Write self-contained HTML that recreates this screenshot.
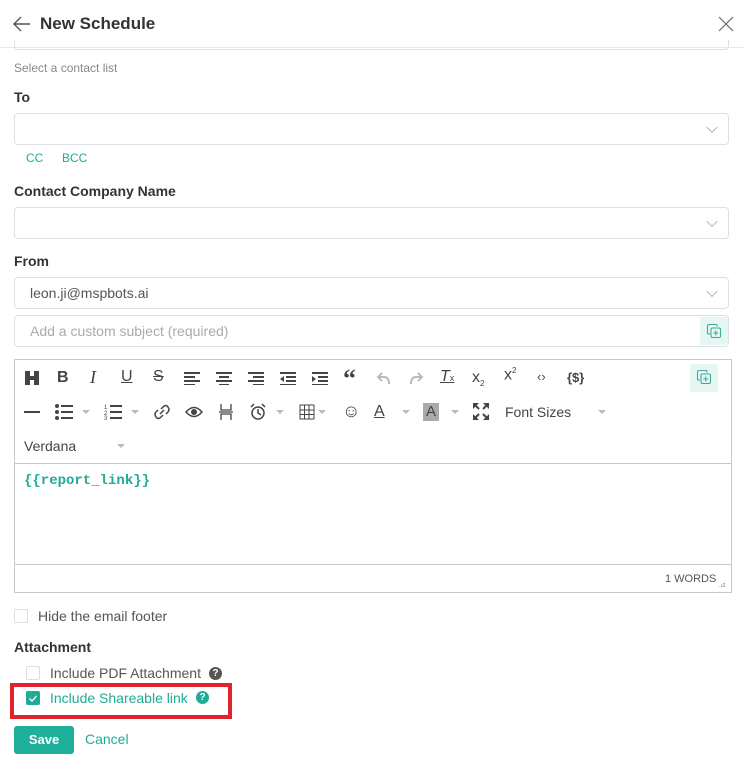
<!DOCTYPE html>
<html><head><meta charset="utf-8">
<style>
*{box-sizing:border-box;margin:0;padding:0}
body{width:744px;height:769px;overflow:hidden;background:#fff;font-family:"Liberation Sans",sans-serif;color:#333;position:relative}
.a{position:absolute}
.lbl{position:absolute;left:14px;font-size:14px;font-weight:bold;color:#333}
.inp{position:absolute;left:14px;width:715px;border:1px solid #dcdfe6;border-radius:4px;background:#fff}
.chev{position:absolute;right:12px;top:50%;width:8px;height:8px;border-right:1px solid #b0b3b8;border-bottom:1px solid #b0b3b8;transform:translateY(-70%) rotate(45deg)}
.tb{position:absolute;font-size:16px;color:#444;line-height:1}
.dd{position:absolute;width:0;height:0;border-left:4px solid transparent;border-right:4px solid transparent;border-top:4px solid #bbb}
.cb{position:absolute;width:14px;height:14px;border:1px solid #dcdfe6;border-radius:2px;background:#fff}
.teal{color:#1fac96}
.cpy{position:absolute;width:28px;height:28px;background:#e6f6f3;border-radius:3px}
</style></head><body>
<svg class="a" style="left:12px;top:15px" width="20" height="18" viewBox="0 0 20 18"><path d="M18 9H2M9 2L2 9l7 7" fill="none" stroke="#555" stroke-width="1.4"/></svg>
<div class="a" style="left:40px;top:14px;font-size:17px;font-weight:bold;color:#333">New Schedule</div>
<svg class="a" style="left:718px;top:16px" width="16" height="16" viewBox="0 0 16 16"><path d="M1 1L15 15M15 1L1 15" stroke="#666" stroke-width="1.2"/></svg>
<div class="a" style="left:0;top:47px;width:744px;height:1px;background:#e8e8e8"></div>
<div class="a" style="left:14px;top:40px;width:715px;height:10px;border:1px solid #dcdfe6;border-top:none;border-radius:0 0 4px 4px"></div>
<div class="a" style="left:14px;top:61px;font-size:12px;color:#888">Select a contact list</div>

<div class="lbl" style="top:89px">To</div>
<div class="inp" style="top:113px;height:32px"><div class="chev"></div></div>
<div class="a teal" style="left:26px;top:151px;font-size:12px">CC</div>
<div class="a teal" style="left:62px;top:151px;font-size:12px">BCC</div>

<div class="lbl" style="top:183px">Contact Company Name</div>
<div class="inp" style="top:207px;height:32px"><div class="chev"></div></div>

<div class="lbl" style="top:253px">From</div>
<div class="inp" style="top:277px;height:32px"><div class="a" style="left:15px;top:7px;font-size:14px;color:#555">leon.ji@mspbots.ai</div><div class="chev"></div></div>
<div class="inp" style="top:315px;height:32px"><div class="a" style="left:15px;top:7px;font-size:14px;color:#aaa">Add a custom subject (required)</div>
<div class="cpy" style="right:0;top:1px;border-radius:0 3px 3px 0"></div></div>
<svg class="a" style="left:706px;top:323px" width="16" height="16" viewBox="0 0 16 16"><path d="M11 3.5V2.5Q11 1.5 10 1.5H3Q1.5 1.5 1.5 3v7q0 1 1 1H4" fill="none" stroke="#3aae97" stroke-width="1.1"/><rect x="5" y="5" width="9.5" height="9.5" rx="1.5" fill="none" stroke="#3aae97" stroke-width="1.1"/><path d="M9.75 7.5v5M7.25 10h5" stroke="#3aae97" stroke-width="1.1"/></svg>

<div class="a" style="left:14px;top:359px;width:718px;height:234px;border:1px solid #c8c8c8"></div>
<div class="a" style="left:15px;top:463px;width:716px;height:1px;background:#c8c8c8"></div>
<div class="a" style="left:15px;top:564px;width:716px;height:1px;background:#c8c8c8"></div>
<div class="cpy" style="left:690px;top:364px"></div>
<svg class="a" style="left:696px;top:369px" width="16" height="16" viewBox="0 0 16 16"><path d="M11 3.5V2.5Q11 1.5 10 1.5H3Q1.5 1.5 1.5 3v7q0 1 1 1H4" fill="none" stroke="#3aae97" stroke-width="1.1"/><rect x="5" y="5" width="9.5" height="9.5" rx="1.5" fill="none" stroke="#3aae97" stroke-width="1.1"/><path d="M9.75 7.5v5M7.25 10h5" stroke="#3aae97" stroke-width="1.1"/></svg>

<svg class="a" style="left:24px;top:370px" width="16" height="16"><rect x="1" y="1" width="5" height="14" fill="#444"/><rect x="10" y="1" width="5" height="14" fill="#444"/><rect x="5" y="6" width="6" height="4" fill="#444"/></svg>
<div class="tb" style="left:57px;top:370px;font-weight:bold">B</div>
<div class="tb" style="left:90px;font-style:italic;font-family:'Liberation Serif',serif;font-size:18px;top:368px">I</div>
<div class="tb" style="left:121px;top:369px;text-decoration:underline">U</div>
<div class="tb" style="left:153px;top:369px;text-decoration:line-through">S</div>
<svg class="a" style="left:184px;top:371px" width="150" height="14"><g fill="#444">
<rect x="0" y="1" width="16" height="2"/><rect x="0" y="5" width="11" height="2"/><rect x="0" y="9" width="16" height="2"/><rect x="0" y="13" width="11" height="1.5"/>
<rect x="32" y="1" width="16" height="2"/><rect x="35" y="5" width="10" height="2"/><rect x="32" y="9" width="16" height="2"/><rect x="35" y="13" width="10" height="1.5"/>
<rect x="64" y="1" width="16" height="2"/><rect x="69" y="5" width="11" height="2"/><rect x="64" y="9" width="16" height="2"/><rect x="69" y="13" width="11" height="1.5"/>
<rect x="96" y="1" width="16" height="2"/><rect x="102" y="5" width="10" height="2"/><rect x="102" y="9" width="10" height="2"/><rect x="96" y="13" width="16" height="1.5"/><path d="M96 8l4-3v6z"/>
<rect x="128" y="1" width="16" height="2"/><rect x="134" y="5" width="10" height="2"/><rect x="134" y="9" width="10" height="2"/><rect x="128" y="13" width="16" height="1.5"/><path d="M132 8l-4-3v6z"/>
</g></svg>
<div class="tb" style="left:343px;top:366px;font-size:26px;font-weight:bold;font-family:'Liberation Serif',serif">“</div>
<svg class="a" style="left:376px;top:371px" width="16" height="14"><path d="M6 2L2 6l4 4M2 6h6q5 0 5 7" fill="none" stroke="#bbb" stroke-width="2"/></svg>
<svg class="a" style="left:408px;top:371px" width="16" height="14"><path d="M10 2l4 4-4 4M14 6H8q-5 0-5 7" fill="none" stroke="#bbb" stroke-width="2"/></svg>
<div class="tb" style="left:440px;top:369px;font-style:italic;text-decoration:underline">T<span style="font-size:9px;font-style:normal">x</span></div>
<div class="tb" style="left:472px;top:370px">x<sub style="font-size:8px">2</sub></div>
<div class="tb" style="left:504px;top:367px">x<sup style="font-size:8px">2</sup></div>
<div class="tb" style="left:537px;top:370px;font-size:13px">‹›</div>
<div class="tb" style="left:567px;top:371px;font-size:13px;font-weight:bold">{$}</div>

<div class="a" style="left:24px;top:411px;width:16px;height:2px;background:#444"></div>
<svg class="a" style="left:55px;top:404px" width="18" height="16"><g fill="#444"><circle cx="2" cy="2" r="2"/><circle cx="2" cy="8" r="2"/><circle cx="2" cy="14" r="2"/><rect x="6" y="1" width="12" height="2"/><rect x="6" y="7" width="12" height="2"/><rect x="6" y="13" width="12" height="2"/></g></svg><div class="dd" style="left:82px;top:410px"></div>
<svg class="a" style="left:104px;top:403px" width="18" height="17"><g fill="#444"><text x="0" y="6" font-size="6" font-family="Liberation Sans">1</text><text x="0" y="12" font-size="6" font-family="Liberation Sans">2</text><text x="0" y="17" font-size="6" font-family="Liberation Sans">3</text><rect x="6" y="2" width="12" height="2"/><rect x="6" y="8" width="12" height="2"/><rect x="6" y="14" width="12" height="2"/></g></svg><div class="dd" style="left:131px;top:410px"></div>
<svg class="a" style="left:154px;top:404px" width="16" height="16"><path d="M7 5l2-2q3-3 5 0t0 5l-2 2M9 11l-2 2q-3 3-5 0t0-5l2-2M6 10l4-4" fill="none" stroke="#444" stroke-width="1.5"/></svg>
<svg class="a" style="left:185px;top:405px" width="18" height="14"><path d="M1 7q8-9 16 0q-8 9-16 0z" fill="none" stroke="#444" stroke-width="1.5"/><circle cx="9" cy="7" r="3" fill="#444"/></svg>
<svg class="a" style="left:218px;top:403px" width="16" height="18"><path d="M3 1v6h10V1M3 17v-6h10v6M1 9h14" fill="none" stroke="#444" stroke-width="1.3"/></svg>
<svg class="a" style="left:250px;top:403px" width="16" height="18"><circle cx="8" cy="10" r="6" fill="none" stroke="#444" stroke-width="1.5"/><path d="M8 6v4l3 2M1 4l3-3M15 4l-3-3" fill="none" stroke="#444" stroke-width="1.5"/></svg><div class="dd" style="left:276px;top:410px"></div>
<svg class="a" style="left:299px;top:404px" width="16" height="16"><path d="M1 1h14v14H1zM1 6h14M1 10.5h14M5.5 1v14M10 1v14" fill="none" stroke="#444"/></svg><div class="dd" style="left:318px;top:410px"></div>
<div class="tb" style="left:342px;top:402px;font-size:18px">☺</div>
<div class="tb" style="left:374px;top:404px;text-decoration:underline">A</div><div class="dd" style="left:402px;top:410px"></div>
<div class="a" style="left:423px;top:403px;width:16px;height:18px;background:#aaa;color:#444;font-size:15px;text-align:center;line-height:17px">A</div><div class="dd" style="left:451px;top:410px"></div>
<svg class="a" style="left:473px;top:403px" width="16" height="17"><g fill="#444"><path d="M0 0h6L0 6zM16 0h-6l6 6zM0 17h6L0 11zM16 17h-6l6-6z"/></g><path d="M2 2l4 4M14 2l-4 4M2 15l4-4M14 15l-4-4" stroke="#444" stroke-width="2"/></svg>
<div class="a" style="left:505px;top:404px;font-size:14px;color:#444">Font Sizes</div><div class="dd" style="left:598px;top:410px"></div>
<div class="a" style="left:24px;top:438px;font-size:14px;color:#444">Verdana</div><div class="dd" style="left:117px;top:444px"></div>

<div class="a" style="left:24px;top:473px;font-family:'Liberation Mono',monospace;font-weight:bold;font-size:14px;color:#1fac96">{{report_link}}</div>
<div class="a" style="left:665px;top:573px;font-size:11px;color:#555">1 WORDS</div>
<div class="a" style="left:718px;top:580px;width:8px;height:8px;background:radial-gradient(#999 0.7px,transparent 0.8px) 0 0/2.5px 2.5px;clip-path:polygon(100% 0,100% 100%,0 100%)"></div>

<div class="cb" style="left:14px;top:609px"></div>
<div class="a" style="left:38px;top:608px;font-size:14px;color:#555">Hide the email footer</div>
<div class="lbl" style="top:639px">Attachment</div>
<div class="cb" style="left:26px;top:666px"></div>
<div class="a" style="left:50px;top:665px;font-size:14px;color:#555">Include PDF Attachment</div>
<div class="a" style="left:209px;top:667px;width:13px;height:13px;border-radius:50%;background:#555;color:#fff;font-size:10px;font-weight:bold;text-align:center;line-height:13px">?</div>
<div class="a" style="left:10px;top:683px;width:222px;height:36px;border:4px solid #e0242c"></div>
<div class="a" style="left:26px;top:691px;width:14px;height:14px;border-radius:2px;background:#1fac96"></div>
<svg class="a" style="left:26px;top:691px" width="14" height="14"><path d="M3.5 7.5l2.5 2.5 4.5-5" fill="none" stroke="#fff" stroke-width="1.3"/></svg>
<div class="a teal" style="left:50px;top:690px;font-size:14px">Include Shareable link</div>
<div class="a" style="left:196px;top:691px;width:13px;height:13px;border-radius:50%;background:#1fac96;color:#fff;font-size:10px;font-weight:bold;text-align:center;line-height:13px">?</div>
<div class="a" style="left:14px;top:726px;width:60px;height:28px;background:#1fb09b;border-radius:3px;color:#fff;font-size:13px;font-weight:bold;text-align:center;line-height:28px">Save</div>
<div class="a teal" style="left:85px;top:731px;font-size:14px">Cancel</div>
</body></html>
